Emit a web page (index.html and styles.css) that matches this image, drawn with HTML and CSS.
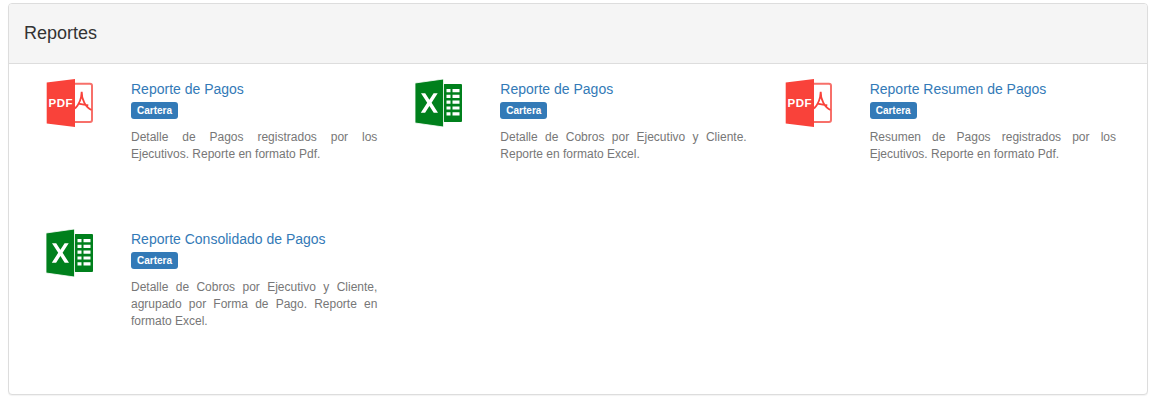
FILE: index.html
```html
<!DOCTYPE html>
<html lang="es">
<head>
<meta charset="utf-8">
<title>Reportes</title>
<link rel="stylesheet" href="styles.css">
</head>
<body>
<section class="panel">
  <header class="panel-heading"><h3 class="panel-title">Reportes</h3></header>
  <div class="panel-body">
    <article class="report">
      <svg class="icon" viewBox="0 0 48 48">
        <rect x="24" y="4.7" width="22" height="38.3" rx="2" class="pdf-frame"/>
        <path d="M0.7 3.4 L29 0 V48 L0.7 44.4 Z" class="pdf-fill"/>
        <path d="M35.7 12.7 C35.5 19 32.5 26 29 29.5 M35.7 12.7 C35.5 20 39.5 28.5 45.5 31 M32.3 24.6 L42.3 26.3" class="pdf-mark"/>
        <text x="2.6" y="27.7" class="pdf-t">PDF</text>
      </svg>
      <div class="info">
        <a class="title" href="#">Reporte de Pagos</a>
        <span class="label">Cartera</span>
        <p class="desc">Detalle de Pagos registrados por los Ejecutivos. Reporte en formato Pdf.</p>
      </div>
    </article>
    <article class="report">
      <svg class="icon" viewBox="0 0 48 48">
        <rect x="28.5" y="5" width="18.5" height="38" rx="1" class="xls-fill"/>
        <path d="M31.5 10h4v3.2h-4zM37.5 10h7v3.2h-7zM31.5 15.8h4V19h-4zM37.5 15.8h7V19h-7zM31.5 21.6h4v3.2h-4zM37.5 21.6h7v3.2h-7zM31.5 27.4h4v3.2h-4zM37.5 27.4h7v3.2h-7zM31.5 33.2h4v3.2h-4zM37.5 33.2h7v3.2h-7z" class="xls-cell"/>
        <path d="M0 4 L28.5 0 V48 L0 44 Z" class="xls-gap"/>
        <path d="M6 14.2 H10.2 L14.4 20.8 L18.6 14.2 H22.7 L16.6 23.8 L23 33.8 H18.7 L14.4 27 L10.1 33.8 H5.8 L12.2 23.8 Z" class="xls-cell"/>
      </svg>
      <div class="info">
        <a class="title" href="#">Reporte de Pagos</a>
        <span class="label">Cartera</span>
        <p class="desc">Detalle de Cobros por Ejecutivo y Cliente. Reporte en formato Excel.</p>
      </div>
    </article>
    <article class="report">
      <svg class="icon" viewBox="0 0 48 48">
        <rect x="24" y="4.7" width="22" height="38.3" rx="2" class="pdf-frame"/>
        <path d="M0.7 3.4 L29 0 V48 L0.7 44.4 Z" class="pdf-fill"/>
        <path d="M35.7 12.7 C35.5 19 32.5 26 29 29.5 M35.7 12.7 C35.5 20 39.5 28.5 45.5 31 M32.3 24.6 L42.3 26.3" class="pdf-mark"/>
        <text x="2.6" y="27.7" class="pdf-t">PDF</text>
      </svg>
      <div class="info">
        <a class="title" href="#">Reporte Resumen de Pagos</a>
        <span class="label">Cartera</span>
        <p class="desc">Resumen de Pagos registrados por los Ejecutivos. Reporte en formato Pdf.</p>
      </div>
    </article>
    <article class="report">
      <svg class="icon" viewBox="0 0 48 48">
        <rect x="28.5" y="5" width="18.5" height="38" rx="1" class="xls-fill"/>
        <path d="M31.5 10h4v3.2h-4zM37.5 10h7v3.2h-7zM31.5 15.8h4V19h-4zM37.5 15.8h7V19h-7zM31.5 21.6h4v3.2h-4zM37.5 21.6h7v3.2h-7zM31.5 27.4h4v3.2h-4zM37.5 27.4h7v3.2h-7zM31.5 33.2h4v3.2h-4zM37.5 33.2h7v3.2h-7z" class="xls-cell"/>
        <path d="M0 4 L28.5 0 V48 L0 44 Z" class="xls-gap"/>
        <path d="M6 14.2 H10.2 L14.4 20.8 L18.6 14.2 H22.7 L16.6 23.8 L23 33.8 H18.7 L14.4 27 L10.1 33.8 H5.8 L12.2 23.8 Z" class="xls-cell"/>
      </svg>
      <div class="info">
        <a class="title" href="#">Reporte Consolidado de Pagos</a>
        <span class="label">Cartera</span>
        <p class="desc">Detalle de Cobros por Ejecutivo y Cliente, agrupado por Forma de Pago. Reporte en formato Excel.</p>
      </div>
    </article>
  </div>
</section>
</body>
</html>
```
FILE: styles.css
```css
* { box-sizing: border-box; }
html, body { height: 100%; }
body {
  margin: 0;
  padding: 3px 5px 0 8px;
  background: #fff;
  font-family: "Liberation Sans", Arial, sans-serif;
  font-size: 12px;
  color: #333;
  overflow: hidden;
}
.pdf-frame { fill: #fff; stroke: #f7706a; stroke-width: 2; }
.pdf-fill { fill: #f9423a; }
.pdf-mark { fill: none; stroke: #f9423a; stroke-width: 1.8; }
.pdf-t {
  font-family: "Liberation Sans", Arial, sans-serif;
  font-size: 11.5px;
  font-weight: 700;
  letter-spacing: .5px;
  fill: #fff;
}
.xls-fill { fill: #00801c; }
.xls-gap { fill: #00801c; stroke: #fff; stroke-width: .8; }
.xls-cell { fill: #fff; }
.panel {
  height: 392px;
  background: #fff;
  border: 1px solid #ddd;
  border-radius: 4px;
  box-shadow: 0 1px 1px rgba(0,0,0,.05);
}
.panel-heading {
  height: 60px;
  padding: 0 15px;
  display: flex;
  align-items: center;
  background: #f5f5f5;
  border-bottom: 1px solid #ddd;
  border-radius: 3px 3px 0 0;
}
.panel-title {
  margin: 0;
  font-size: 18px;
  font-weight: 400;
  color: #333;
}
.panel-body {
  display: grid;
  grid-template-columns: repeat(3, 369.33px);
  grid-auto-rows: 150px;
  padding: 15px 0 0;
}
.report {
  display: flex;
  align-items: flex-start;
  padding: 0 1px 0 37px;
}
.icon {
  flex: none;
  width: 48px;
  height: 48px;
  margin-right: 37px;
}
.info { flex: 1; min-width: 0; }
.title {
  display: block;
  font-size: 14px;
  line-height: 20px;
  color: #337ab7;
  text-decoration: none;
}
.label {
  display: inline-block;
  margin-top: 3px;
  padding: 0 6px;
  height: 17px;
  line-height: 17px;
  font-size: 10px;
  font-weight: 700;
  color: #fff;
  background: #337ab7;
  border-radius: 3px;
}
.desc {
  margin: 10px 0 0;
  font-size: 12px;
  line-height: 17.14px;
  color: #777;
  text-align: justify;
}
```
